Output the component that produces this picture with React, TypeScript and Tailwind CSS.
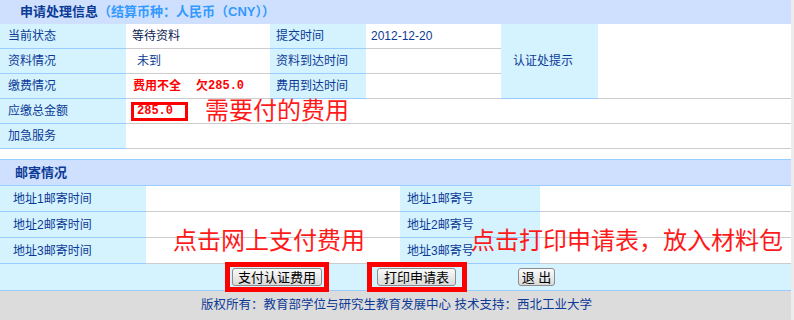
import React from "react";

const label = "flex items-center bg-[#d5f3fe] border-b border-[#99ccff] text-[#0b3a96]";
const value = "flex items-center bg-white border-b border-[#cccccc] text-[#0a1a50]";

function Btn({ children, w }: { children: React.ReactNode; w: string }) {
  return (
    <button
      type="button"
      className={`${w} h-[18px] rounded-[3px] border border-[#8c8c8c] bg-gradient-to-b from-[#fbfbfb] to-[#dadada] text-[13px] leading-none text-black`}
    >
      {children}
    </button>
  );
}

export default function App() {
  return (
    <div className="h-[320px] w-[794px] overflow-hidden bg-[#ececec] font-['Liberation_Sans','Noto_Sans_CJK_SC',sans-serif] text-[12px]">
      <div className="w-[791px] bg-white">
        {/* 申请处理信息 */}
        <div className="flex h-[24px] items-center bg-[#cfe0fe] pl-[20px] text-[13px] font-bold">
          <span className="text-[#0b3a96]">申请处理信息</span>
          <span className="text-[#3399ff]">（结算币种：人民币（CNY））</span>
        </div>

        <div className="grid grid-cols-[126px_144px_96px_135px_97px_193px]">
          <div className={`${label} h-[25px] pl-[8px]`}>当前状态</div>
          <div className={`${value} h-[25px] pl-[6px]`}>等待资料</div>
          <div className={`${label} h-[25px] pl-[6px]`}>提交时间</div>
          <div className={`${value} h-[25px] pl-[5px] text-[#0b3a96]`}>2012-12-20</div>
          <div className={`${label} row-span-3 pl-[12px]`}>认证处提示</div>
          <div className={`${value} row-span-3`} />

          <div className={`${label} h-[25px] pl-[8px]`}>资料情况</div>
          <div className={`${value} h-[25px] pl-[11px] text-[#0b3a96]`}>未到</div>
          <div className={`${label} h-[25px] pl-[6px]`}>资料到达时间</div>
          <div className={`${value} h-[25px]`} />

          <div className={`${label} h-[25px] pl-[8px]`}>缴费情况</div>
          <div className={`${value} h-[25px] pl-[7px] font-bold text-[#ff0000]`}>
            费用不全<span className="ml-[15px]">欠</span>
            <span className="font-['Liberation_Mono',monospace]">285.0</span>
          </div>
          <div className={`${label} h-[25px] pl-[6px]`}>费用到达时间</div>
          <div className={`${value} h-[25px]`} />

          <div className={`${label} h-[25px] pl-[8px]`}>应缴总金额</div>
          <div className={`${value} col-span-5 h-[25px] pl-[5px]`}>
            <span className="flex h-[19px] w-[57px] items-center border-[3px] border-[#ff0000] pl-[3px] font-['Liberation_Mono',monospace] font-bold text-[#ff0000]">
              285.0
            </span>
            <span className="ml-[17px] text-[24px] leading-[24px] text-[#ff1a1a]">需要付的费用</span>
          </div>

          <div className={`${label} h-[25px] pl-[8px]`}>加急服务</div>
          <div className={`${value} col-span-5 h-[25px] border-[#99ccff]`} />
        </div>

        <div className="h-[11px] border-b border-[#99ccff] bg-white" />

        {/* 邮寄情况 */}
        <div className="relative">
          <div className="flex h-[26px] items-center border-b border-[#99ccff] bg-[#cfe0fe] pl-[15px] text-[13px] font-bold text-[#0b3a96]">
            邮寄情况
          </div>
          <div className="grid grid-cols-[146px_254px_140px_251px]">
            {[1, 2, 3].map((n) => (
              <React.Fragment key={n}>
                <div className={`${label} h-[26px] pl-[13px]`}>地址{n}邮寄时间</div>
                <div className={`${value} h-[26px]`} />
                <div className={`${label} h-[26px] pl-[7px]`}>地址{n}邮寄号</div>
                <div className={`${value} h-[26px]`} />
              </React.Fragment>
            ))}
          </div>

          <div className="flex h-[27px] items-center justify-center border-b border-[#99ccff] bg-[#d5f3fe] pr-[4px]">
            <span className="relative flex">
              <Btn w="w-[90px]">支付认证费用</Btn>
              <span className="absolute -inset-x-[7px] -inset-y-[6px] border-[5px] border-[#ff0000]" />
            </span>
            <span className="relative ml-[55px] flex">
              <Btn w="w-[79px]">打印申请表</Btn>
              <span className="absolute -top-[6px] -bottom-[6px] -left-[10px] -right-[11px] border-[5px] border-[#ff0000]" />
            </span>
            <span className="ml-[62px] flex">
              <Btn w="w-[37px]">退 出</Btn>
            </span>
          </div>

          <span className="absolute left-[173px] top-[69px] text-[24px] leading-[24px] whitespace-nowrap text-[#ff1a1a]">
            点击网上支付费用
          </span>
          <span className="absolute left-[471px] top-[69px] text-[24px] leading-[24px] whitespace-nowrap text-[#ff1a1a]">
            点击打印申请表，放入材料包
          </span>
        </div>

        <div className="flex h-[29px] items-center justify-center bg-[#dcdcdc] pl-[2px] text-[12.5px] text-[#0b3a96]">
          版权所有：教育部学位与研究生教育发展中心 技术支持：西北工业大学
        </div>
      </div>
    </div>
  );
}
